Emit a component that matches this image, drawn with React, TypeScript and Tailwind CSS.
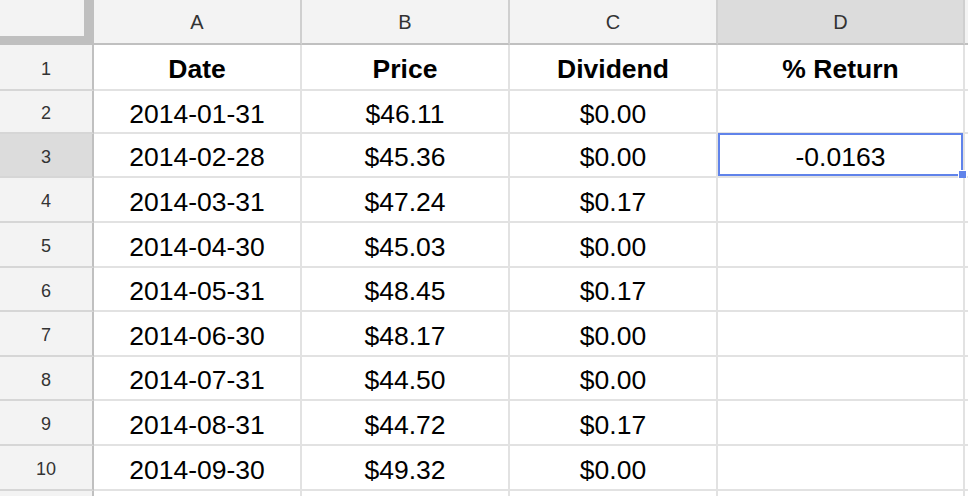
import React from "react";

const rows = [
  { n: 1, h: "h-[46px]", cells: ["Date", "Price", "Dividend", "% Return"], bold: true },
  { n: 2, h: "h-[43px]", cells: ["2014-01-31", "$46.11", "$0.00", ""] },
  { n: 3, h: "h-[44px]", cells: ["2014-02-28", "$45.36", "$0.00", "-0.0163"] },
  { n: 4, h: "h-[45px]", cells: ["2014-03-31", "$47.24", "$0.17", ""] },
  { n: 5, h: "h-[45px]", cells: ["2014-04-30", "$45.03", "$0.00", ""] },
  { n: 6, h: "h-[44px]", cells: ["2014-05-31", "$48.45", "$0.17", ""] },
  { n: 7, h: "h-[45px]", cells: ["2014-06-30", "$48.17", "$0.00", ""] },
  { n: 8, h: "h-[44px]", cells: ["2014-07-31", "$44.50", "$0.00", ""] },
  { n: 9, h: "h-[45px]", cells: ["2014-08-31", "$44.72", "$0.17", ""] },
  { n: 10, h: "h-[45px]", cells: ["2014-09-30", "$49.32", "$0.00", ""] },
  { n: 11, h: "h-[45px]", cells: ["", "", "", ""] },
];

const colWidths = ["w-[208px]", "w-[208px]", "w-[208px]", "w-[247px]"];
const letters = ["A", "B", "C", "D"];

export default function App() {
  return (
    <div
      className="h-[496px] w-[968px] overflow-hidden bg-white text-black"
      style={{ fontFamily: '"Liberation Sans", Arial, sans-serif' }}
    >
      {/* Column header row */}
      <div className="flex h-[45px]">
        <div className="flex h-[45px] w-[94px] shrink-0 flex-col bg-[#bfbfbf]">
          <div className="h-[36px] w-[84px] bg-[#f3f3f3]" />
        </div>
        {letters.map((l, i) => (
          <div
            key={l}
            className={`${colWidths[i]} flex shrink-0 items-center justify-center border-r-2 border-b-2 border-r-[#cfcfcf] border-b-[#c0c0c0] text-[20px] text-[#333] ${
              l === "D" ? "bg-[#dcdcdc]" : "bg-[#f3f3f3]"
            }`}
          >
            {l}
          </div>
        ))}
        <div className="flex-1 border-b-2 border-b-[#c0c0c0] bg-[#f3f3f3]" />
      </div>

      {/* Data rows */}
      {rows.map((row) => (
        <div key={row.n} className={`flex ${row.h}`}>
          <div
            className={`flex w-[94px] shrink-0 items-center justify-center border-r-2 border-b-2 border-r-[#c0c0c0] border-b-[#d6d6d6] pt-[4px] text-[18px] text-[#333] ${
              row.n === 3 ? "bg-[#dcdcdc]" : "bg-[#f3f3f3]"
            }`}
          >
            {row.n < 11 ? row.n : ""}
          </div>
          {row.cells.map((c, i) => (
            <div
              key={i}
              className={`${colWidths[i]} relative flex shrink-0 items-center justify-center border-r-2 border-b-2 border-[#e2e2e2] pt-[6px] text-[26.5px] ${
                row.bold ? "font-bold" : ""
              }`}
            >
              {c}
              {row.n === 3 && i === 3 && (
                <>
                  <div className="absolute -top-[1px] right-0 bottom-0 left-0 border-2 border-[#6083ea]" />
                  <div className="absolute -right-[4px] -bottom-[3px] h-[9px] w-[9px] border border-white bg-[#6083ea]" />
                </>
              )}
            </div>
          ))}
          <div className="flex-1 border-b-2 border-[#e2e2e2]" />
        </div>
      ))}
    </div>
  );
}
